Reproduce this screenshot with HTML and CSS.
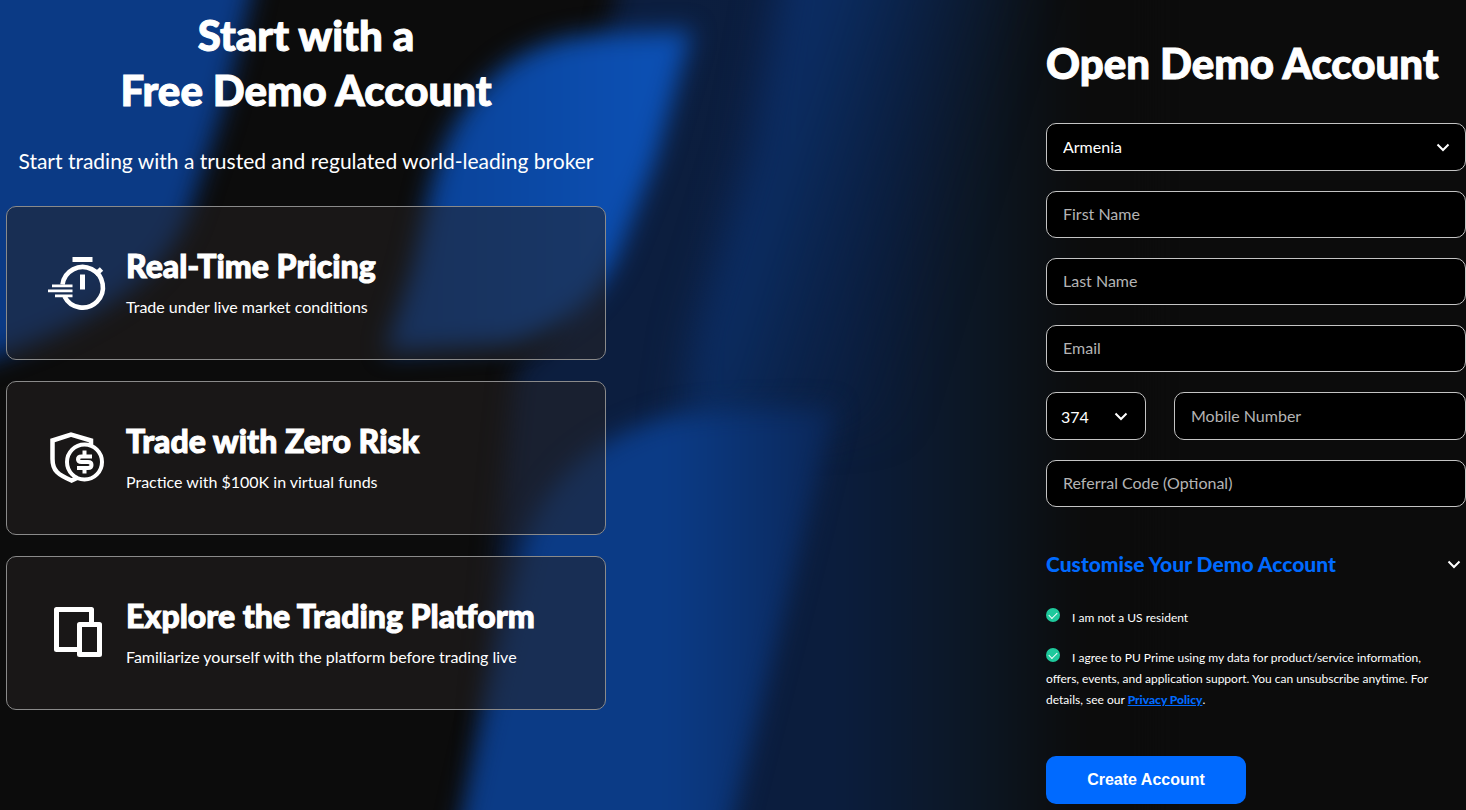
FILE: index.html
```html
<!DOCTYPE html>
<html lang="en">
<head>
  <meta charset="UTF-8" />
  <meta name="viewport" content="width=device-width, initial-scale=1.0"/>
  <title>Open Demo Account</title>
  <link rel="stylesheet" href="styles.css">
</head>
<body>

  <!-- Background -->
  <svg class="page-bg" viewBox="0 0 1466 810" preserveAspectRatio="none" aria-hidden="true">
    <defs>
      <filter id="soft" x="-20%" y="-20%" width="140%" height="140%" color-interpolation-filters="sRGB"><feGaussianBlur stdDeviation="12"/></filter>
      <filter id="softer" x="-20%" y="-20%" width="140%" height="140%" color-interpolation-filters="sRGB"><feGaussianBlur stdDeviation="20"/></filter>
      <linearGradient id="navy" gradientUnits="userSpaceOnUse" x1="600" y1="0" x2="1080" y2="0">
        <stop offset="0" stop-color="#0c1e3f"/>
        <stop offset="0.5" stop-color="#0b1d3d"/>
        <stop offset="0.8" stop-color="#0c1622"/>
        <stop offset="1" stop-color="#0c0c0c"/>
      </linearGradient>
      <linearGradient id="band" gradientUnits="userSpaceOnUse" x1="750" y1="0" x2="1010" y2="80">
        <stop offset="0" stop-color="#0c3070"/>
        <stop offset="0.35" stop-color="#0b2a5b"/>
        <stop offset="1" stop-color="#0b1d3d" stop-opacity="0"/>
      </linearGradient>
      <linearGradient id="lower" gradientUnits="userSpaceOnUse" x1="670" y1="0" x2="850" y2="0">
        <stop offset="0" stop-color="#0b3b86"/>
        <stop offset="1" stop-color="#0b2553"/>
      </linearGradient>
      <linearGradient id="bright" gradientUnits="userSpaceOnUse" x1="400" y1="0" x2="640" y2="0">
        <stop offset="0" stop-color="#0a4195"/>
        <stop offset="1" stop-color="#0c4fb2"/>
      </linearGradient>
    </defs>
    <rect width="1466" height="810" fill="#0c0c0c"/>
    <path filter="url(#soft)" fill="#0b3a85" d="M-60-60H262L250 0 222 110 188 215Q165 275 90 315 40 345-60 375Z"/>
    <path filter="url(#soft)" fill="url(#navy)" d="M630-60H1150V870H470L500 520 515 370 560 330 590 100Z"/>
    <path filter="url(#softer)" fill="url(#band)" d="M790-60H1040V430H680L695 330 750 150Z"/>
    <path filter="url(#soft)" fill="url(#bright)" d="M692 30 655 160 618 255Q585 325 510 344L385 352 412 270 430 190Q450 105 510 62 550 36 600 34Z"/>
    <path filter="url(#soft)" fill="url(#lower)" d="M525 540Q555 455 650 422 690 405 835 408L800 550 765 690 720 870H450L490 690Z"/>
  </svg>

  <main class="container">

    <section class="intro">
      <h1>Start with a<br>Free Demo Account</h1>
      <p class="lead">Start trading with a trusted and regulated world-leading broker</p>

      <div class="cards">
        <div class="card">
          <svg class="card-icon" viewBox="0 0 60 60" fill="none" stroke="#fff" aria-hidden="true">
            <path stroke-width="5" d="M25.500 6.500H45.500"/>
            <path stroke-width="4.600" d="M15.500 31.500A20.300 20.300 0 1 1 17.500 43.500"/>
            <path stroke-width="5" d="M48.500 21.500 54.500 16"/>
            <path stroke-width="5" d="M35.500 21.500V36.500"/>
            <path stroke-width="2.800" d="M5 32.800H25.500M1 37.800H25.500M8 42.800H25.500"/>
          </svg>
          <div>
            <h2>Real-Time Pricing</h2>
            <p>Trade under live market conditions</p>
          </div>
        </div>

        <div class="card">
          <svg class="card-icon" viewBox="0 0 60 60" fill="none" stroke="#fff" aria-hidden="true">
            <path stroke-width="4.500" d="M44 17V12.500L24 6.500 5.500 12.500V31Q5.500 39.500 10 44 14 48 24.500 52.500L31 49.500"/>
            <circle cx="37.500" cy="34" r="17.500" stroke-width="4"/>
            <path stroke-width="4" d="M45 28.500H34.500Q31 28.500 31 31.200 31 34 34.500 34H41Q44.500 34 44.500 37 44.500 40 41 40H30"/>
            <path stroke-width="4" d="M37.500 22.500V29M37.500 39V45.500"/>
          </svg>
          <div>
            <h2>Trade with Zero Risk</h2>
            <p>Practice with $100K in virtual funds</p>
          </div>
        </div>

        <div class="card">
          <svg class="card-icon" viewBox="0 0 60 60" fill="none" stroke="#fff" stroke-linejoin="round" aria-hidden="true">
            <path stroke-width="5" d="M30 46.500H9.500V6.500H44.500V21"/>
            <path stroke-width="5" d="M32.500 21.500H52.500V51.500H32.500Z"/>
          </svg>
          <div>
            <h2>Explore the Trading Platform</h2>
            <p>Familiarize yourself with the platform before trading live</p>
          </div>
        </div>
      </div>
    </section>

    <form class="signup" id="demoForm">
      <h1>Open Demo Account</h1>

      <div class="select-box">
        <select id="country" aria-label="Country">
          <option>Armenia</option>
        </select>
        <svg class="chevron" viewBox="0 0 14 14" aria-hidden="true"><path d="M1.500 4.500 7 10 12.500 4.500"/></svg>
      </div>
      <input type="text" class="field" id="firstName" placeholder="First Name" aria-label="First Name" />
      <input type="text" class="field" id="lastName" placeholder="Last Name" aria-label="Last Name" />
      <input type="email" class="field" id="email" placeholder="Email" aria-label="Email" />

      <div class="phone-row">
        <div class="select-box code">
          <select id="phoneCode" aria-label="Country code">
            <option>374</option>
          </select>
          <svg class="chevron" viewBox="0 0 14 14" aria-hidden="true"><path d="M1.500 4.500 7 10 12.500 4.500"/></svg>
        </div>
        <input type="tel" class="field" id="mobile" placeholder="Mobile Number" aria-label="Mobile Number" />
      </div>

      <input type="text" class="field" id="referral" placeholder="Referral Code (Optional)" aria-label="Referral Code (Optional)" />

      <button type="button" class="customise-btn">
        Customise Your Demo Account
        <svg class="chevron-inline" viewBox="0 0 14 14" aria-hidden="true"><path d="M1.500 4.500 7 10 12.500 4.500"/></svg>
      </button>

      <div class="terms">
        <p>
          <input type="checkbox" id="notUs" checked />
          <label for="notUs">I am not a US resident</label>
        </p>
        <p>
          <input type="checkbox" id="agree" checked />
          <label for="agree">I agree to PU Prime using my data for product/service information, offers, events, and application support. You can unsubscribe anytime. For details, see our</label>
          <a href="#">Privacy Policy</a>.
        </p>
      </div>

      <button type="submit" class="submit-btn">Create Account</button>
    </form>

  </main>

</body>
</html>
```
FILE: styles.css
```css
* {
  box-sizing: border-box;
}

body {
  margin: 0;
  font-family: Lato, 'Liberation Sans', sans-serif;
  background: #0c0c0c;
  color: #fff;
}

h1, h2, p {
  margin: 0;
}

.page-bg {
  position: absolute;
  top: 0;
  left: 0;
  width: 100%;
  height: 100%;
  z-index: -1;
}

.container {
  display: flex;
  justify-content: space-between;
  gap: 40px;
  padding: 8px 0 6px 6px;
}

h1, h2 {
  font-weight: 900;
  -webkit-text-stroke: 1px #fff;
}

h1 {
  font-size: 42px;
  line-height: 55px;
}

/* left side */
.intro {
  flex: 0 1 600px;
  text-align: center;
}

.lead {
  margin-top: 28px;
  font-size: 21px;
  line-height: 30px;
}

.cards {
  display: flex;
  flex-direction: column;
  gap: 21px;
  margin-top: 30px;
  text-align: left;
}

.card {
  display: flex;
  align-items: center;
  gap: 19px;
  min-height: 154px;
  padding: 24px 40px;
  border: 1px solid #8a8a8a;
  border-radius: 10px;
  background: rgba(38, 33, 34, 0.5);
}

.card-icon {
  flex: none;
  width: 60px;
  height: 60px;
}

.card h2 {
  font-size: 32px;
  line-height: 40px;
}

.card p {
  margin-top: 8px;
  font-size: 16px;
  line-height: 26px;
}

/* form */
.signup {
  flex: 0 1 420px;
  display: flex;
  flex-direction: column;
  gap: 20px;
  padding-top: 28px;
}

.signup h1 {
  margin-bottom: 12px;
}

.field, .select-box select {
  width: 100%;
  height: 47px;
  padding: 0 16px 2px;
  border: 1px solid #c4c4c4;
  border-radius: 10px;
  background: #000;
  color: #fff;
  font-family: inherit;
  font-size: 16px;
}

.field::placeholder {
  color: #b4b4b4;
  opacity: 1;
}

.select-box {
  position: relative;
}

.select-box select {
  display: block;
  height: 48px;
  appearance: none;
}

.chevron {
  position: absolute;
  top: 17px;
  right: 16px;
  pointer-events: none;
}

.chevron, .chevron-inline {
  width: 14px;
  height: 14px;
  fill: none;
  stroke: #fff;
  stroke-width: 2;
}

.phone-row {
  display: flex;
  gap: 28px;
}

.phone-row .code {
  flex: 0 0 100px;
}

.phone-row .code select {
  padding: 0 14px;
}

.phone-row .code .chevron {
  right: 18px;
}

.phone-row .field {
  flex: 1;
  min-width: 0;
  height: 48px;
}

.customise-btn {
  display: flex;
  justify-content: space-between;
  align-items: center;
  margin-top: 22px;
  padding: 0 5px 0 0;
  border: none;
  background: none;
  color: #006aff;
  font-family: inherit;
  font-size: 21px;
  line-height: 30px;
  font-weight: 900;
  cursor: pointer;
}

.terms {
  margin-top: 8px;
  padding-right: 20px;
  font-size: 12px;
  line-height: 21px;
}

.terms p + p {
  margin-top: 19px;
}

.terms input {
  appearance: none;
  display: inline-block;
  width: 14px;
  height: 14px;
  margin: 0 9px 0 0;
  border-radius: 50%;
  background: #1fc99c;
}

.terms input::after {
  content: "";
  display: block;
  width: 7px;
  height: 4px;
  margin: 4px auto 0;
  border: solid #fff;
  border-width: 0 0 1px 1px;
  transform: rotate(-45deg);
}

.terms a {
  color: #006aff;
  font-weight: 900;
}

.submit-btn {
  width: 200px;
  height: 48px;
  margin-top: 26px;
  border: none;
  border-radius: 10px;
  background: #006aff;
  color: #fff;
  font-family: 'Liberation Sans', Arial, sans-serif;
  font-size: 16px;
  font-weight: bold;
  cursor: pointer;
}
```
